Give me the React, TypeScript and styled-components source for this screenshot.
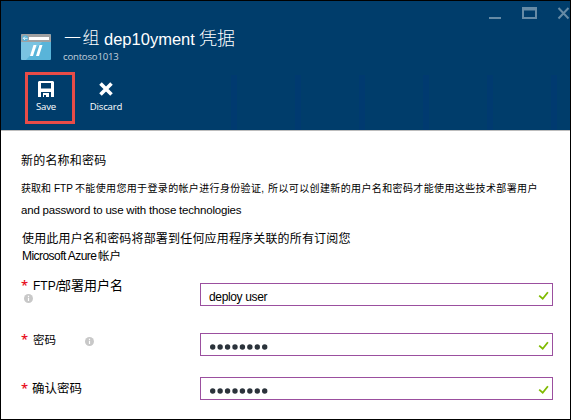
import React from "react";
import styled, { createGlobalStyle } from "styled-components";

const GlobalStyle = createGlobalStyle`
  * { box-sizing: border-box; }
  body { margin: 0; background: #000; }
`;

const Blade = styled.div`
  width: 571px;
  height: 420px;
  border: 1px solid #000;
  background: #fff;
  overflow: hidden;
  font-family: "Liberation Sans", "Noto Sans CJK SC", sans-serif;
  color: #000;
`;

const Header = styled.header`
  height: 130px;
  display: flex;
  flex-direction: column;
  background: #003d6b;
  border-bottom: 1px solid #bdbdbd;
  color: #fff;
`;

const WindowBar = styled.div`
  height: 26px;
  display: flex;
  justify-content: flex-end;
  padding-top: 5px;
`;

const TitleRow = styled.div`
  height: 45px;
  display: flex;
  padding-left: 20px;
`;

const AppIcon = styled.svg`
  width: 30px;
  height: 26px;
  margin-top: 7px;
  flex: none;
`;

const Heading = styled.div`
  margin-left: 12px;
`;

const Title = styled.h1`
  margin: 0;
  padding-left: 1px;
  height: 24px;
  display: flex;
  font-size: 17px;
  line-height: 24px;
  font-weight: 400;
  white-space: nowrap;
`;

const Run = styled.span<{ $size?: number; $spacing?: number; $width?: number; $light?: boolean }>`
  font-size: ${(p) => (p.$size ? `${p.$size}px` : "inherit")};
  font-weight: ${(p) => (p.$light ? 300 : 400)};
  letter-spacing: ${(p) => p.$spacing ?? 0}px;
  width: ${(p) => (p.$width ? `${p.$width}px` : "auto")};
  flex: none;
`;

const Subtitle = styled.div`
  height: 12px;
  line-height: 11px;
  font-family: "Open Sans", sans-serif;
  font-size: 9.6px;
  letter-spacing: -0.2px;
  color: #c3d1dc;
`;

const Toolbar = styled.div`
  flex: 1;
  display: flex;
  padding-left: 24px;
  background: repeating-linear-gradient(90deg, #003a70 0 6px, transparent 6px 64px) 230px 3px / 340px 100% no-repeat;
`;

const Command = styled.button<{ $marked?: boolean; $width: number }>`
  width: ${(p) => p.$width}px;
  height: 52px;
  padding: ${(p) => (p.$marked ? "6px 8px 0 0" : "9px 0 0")};
  border: ${(p) => (p.$marked ? "3px solid #e84c48" : "0")};
  background: none;
  color: #fff;
  display: flex;
  flex-direction: column;
  align-items: center;
  font-family: "Open Sans", sans-serif;
  font-size: 9.6px;
  letter-spacing: -0.2px;
  line-height: 12px;
`;

const CommandIcon = styled.svg`
  width: 16px;
  height: 16px;
  margin-bottom: 4px;
  flex: none;
`;

const Content = styled.main`
  padding: 21px 0 0 20px;
`;

const Line = styled.div<{ $height: number; $inset?: number }>`
  height: ${(p) => p.$height}px;
  line-height: 18px;
  padding-left: ${(p) => p.$inset ?? 0}px;
  display: flex;
  white-space: nowrap;
`;

const Field = styled.div<{ $height: number }>`
  height: ${(p) => p.$height}px;
  display: flex;
`;

const LabelCell = styled.div<{ $top: number }>`
  width: 179px;
  margin-top: ${(p) => p.$top}px;
  display: flex;
  flex-direction: column;
  flex: none;
`;

const Label = styled.label<{ $inset: number }>`
  height: 18px;
  line-height: 18px;
  display: grid;
  grid-template-columns: ${(p) => p.$inset}px auto auto 1fr;
  white-space: nowrap;
`;

const Asterisk = styled.span`
  color: #e81123;
  font-size: 13px;
  line-height: 17px;
  font-family: "Open Sans", sans-serif;
  font-weight: 600;
`;

const InfoMark = styled.svg<{ $left: number; $top: number }>`
  width: 9px;
  height: 9px;
  margin: ${(p) => p.$top}px 0 0 ${(p) => p.$left}px;
`;

const InputBox = styled.div`
  width: 353px;
  height: 23px;
  padding: 0 3px 0 8px;
  border: 1px solid #9b4f9f;
  display: flex;
  align-items: center;
  justify-content: space-between;
`;

const Value = styled.span`
  padding-top: 5px;
  font-size: 12px;
  line-height: 14px;
  letter-spacing: -0.35px;
`;

const Dots = styled.svg`
  width: 60px;
  height: 6px;
  margin-top: 4px;
`;

const Tick = styled.svg`
  width: 11px;
  height: 10px;
  margin-top: 2px;
`;

const Info = ({ left, top }: { left: number; top: number }) => (
  <InfoMark $left={left} $top={top} viewBox="0 0 9 9">
    <circle cx="4.5" cy="4.5" r="4.5" fill="#c8c8c8" />
    <path d="M4.5 1.7v1.2M4.5 3.8v3.3" stroke="#fff" strokeWidth="1.2" />
  </InfoMark>
);

const Entry = ({ children }: { children: React.ReactNode }) => (
  <InputBox>
    {children}
    <Tick viewBox="0 0 11 10">
      <path d="M1.2 4.6 4.7 7.7 9.9 1.2" fill="none" stroke="#7fba00" strokeWidth="1.8" />
    </Tick>
  </InputBox>
);

const Password = () => (
  <Dots viewBox="0 0 60 6">
    {Array.from({ length: 8 }, (_, i) => (
      <circle key={i} cx={3.7 + i * 7.43} cy="3" r="2.7" fill="#2b333b" />
    ))}
  </Dots>
);

export default function App() {
  return (
    <>
      <GlobalStyle />
      <Blade>
        <Header>
          <WindowBar>
            <svg width="83" height="16" viewBox="0 0 83 16" fill="none" stroke="#668ba6">
              <path d="M2 12h12" strokeWidth="2" />
              <path d="M35 2.5h15" strokeWidth="3" />
              <path d="M36 3.5h13v8.5H36z" strokeWidth="2" />
              <path d="m71.5 2 10 10.5m0-10.5-10 10.5" strokeWidth="2" />
            </svg>
          </WindowBar>
          <TitleRow>
            <AppIcon viewBox="0 0 30 26">
              <rect width="30" height="26" rx="1" fill="#59b4d9" />
              <path d="M0 8h21L5 26H1l-1-1z" fill="#7ac3e1" />
              <path d="M0 8V1l1-1h28l1 1v7z" fill="#a0a1a2" />
              <rect x="8" y="3" width="20" height="3" fill="#fff" />
              <circle cx="4.2" cy="4.3" r="3" fill="#59b4d9" />
              <path d="M6.5 4.3H2.3M4 2.6 2.3 4.3 4 6" fill="none" stroke="#fff" strokeWidth="0.8" />
              <path d="m12.5 11h3L12 22H9zM18.5 11h3L18 22h-3z" fill="#fff" />
            </AppIcon>
            <Heading>
              <Title>
                <Run $light $size={17} $spacing={1.6} $width={40}>一组</Run>
                <Run $size={16.5} $width={95}>dep10yment</Run>
                <Run $light $size={18}>凭据</Run>
              </Title>
              <Subtitle>contoso1013</Subtitle>
            </Heading>
          </TitleRow>
          <Toolbar>
            <Command $marked $width={50}>
              <CommandIcon viewBox="0 0 16 16">
                <path
                  fillRule="evenodd"
                  fill="#fff"
                  d="M1 0h14l1 1v15h-3v-5H3v5H0V1zM3 2v5.500h10V2zM5 12h6v4H8v-2H6v2H5z"
                />
              </CommandIcon>
              Save
            </Command>
            <Command $width={62}>
              <CommandIcon viewBox="0 0 16 16">
                <path d="m2.5 2.500 11 11m0-11-11 11" stroke="#fff" strokeWidth="3.6" />
              </CommandIcon>
              Discard
            </Command>
          </Toolbar>
        </Header>
        <Content>
          <Line $height={28}>
            <Run $size={12} $spacing={0.2}>新的名称和密码</Run>
          </Line>
          <Line $height={21}>
            <Run $size={10} $width={33}>获取和</Run>
            <Run $size={10} $width={21}>FTP</Run>
            <Run $size={10} $spacing={0.35} $width={193}>不能使用您用于登录的帐户进行身份验证,</Run>
            <Run $size={10} $spacing={0.38}>所以可以创建新的用户名和密码才能使用这些技术部署用户</Run>
          </Line>
          <Line $height={29}>
            <Run $size={11.5} $spacing={-0.2}>and password to use with those technologies</Run>
          </Line>
          <Line $height={17} $inset={1}>
            <Run $size={12} $spacing={0.17}>使用此用户名和密码将部署到任何应用程序关联的所有订阅您</Run>
          </Line>
          <Line $height={36} $inset={1}>
            <Run $size={12} $spacing={-0.55} $width={76}>Microsoft Azure</Run>
            <Run $size={11.5}>帐户</Run>
          </Line>
          <Field $height={50}>
            <LabelCell $top={-6}>
              <Label $inset={12}>
                <Asterisk>*</Asterisk>
                <Run $size={12} $width={25}>FTP/</Run>
                <Run $size={13}>部署用户名</Run>
              </Label>
              <Info left={3} top={-1} />
            </LabelCell>
            <Entry>
              <Value>deploy user</Value>
            </Entry>
          </Field>
          <Field $height={44}>
            <LabelCell $top={-2}>
              <Label $inset={12}>
                <Asterisk>*</Asterisk>
                <Run $size={11.5}>密码</Run>
                <Info left={29} top={6} />
              </Label>
            </LabelCell>
            <Entry>
              <Password />
            </Entry>
          </Field>
          <Field $height={23}>
            <LabelCell $top={3}>
              <Label $inset={11}>
                <Asterisk>*</Asterisk>
                <Run $size={12.5}>确认密码</Run>
              </Label>
            </LabelCell>
            <Entry>
              <Password />
            </Entry>
          </Field>
        </Content>
      </Blade>
    </>
  );
}
